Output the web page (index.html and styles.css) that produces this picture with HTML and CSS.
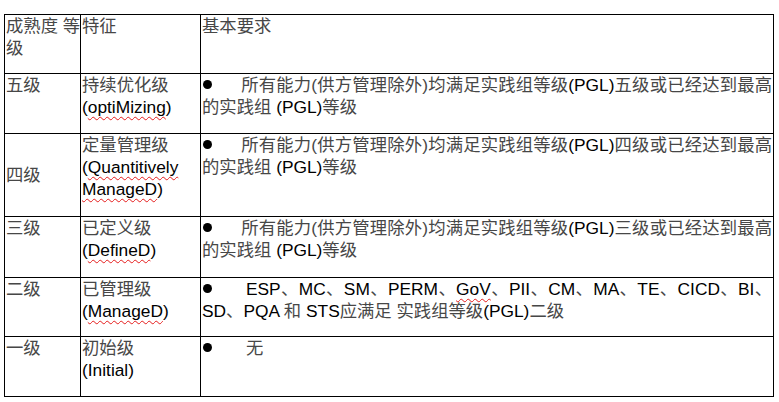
FILE: index.html
```html
<!DOCTYPE html>
<html lang="zh-CN">
<head>
<meta charset="utf-8">
<title>成熟度等级</title>
<link rel="stylesheet" href="styles.css">
</head>
<body>
<table class="grid">
  <colgroup>
    <col class="c1">
    <col class="c2">
    <col class="c3">
  </colgroup>
  <tr class="r-head">
    <td><span class="nw">成熟度 等</span><br>级</td>
    <td>特征</td>
    <td>基本要求</td>
  </tr>
  <tr class="r5">
    <td>五级</td>
    <td>持续优化级<br><span class="en">(<span class="sp">optiMizing</span>)</span></td>
    <td><p class="item"><span class="dot"></span>所有能力(供方管理除外)均满足实践组等级<span class="en">(PGL)</span>五级或已经达到最高的实践组 <span class="en">(PGL)</span>等级</p></td>
  </tr>
  <tr class="r4">
    <td class="mid">四级</td>
    <td>定量管理级<br><span class="en">(<span class="sp">Quantitively</span> <span class="sp">ManageD</span>)</span></td>
    <td><p class="item"><span class="dot"></span>所有能力(供方管理除外)均满足实践组等级<span class="en">(PGL)</span>四级或已经达到最高的实践组 <span class="en">(PGL)</span>等级</p></td>
  </tr>
  <tr class="r3">
    <td>三级</td>
    <td>已定义级<br><span class="en">(<span class="sp">DefineD</span>)</span></td>
    <td><p class="item"><span class="dot"></span>所有能力(供方管理除外)均满足实践组等级<span class="en">(PGL)</span>三级或已经达到最高的实践组 <span class="en">(PGL)</span>等级</p></td>
  </tr>
  <tr class="r2">
    <td>二级</td>
    <td>已管理级<br><span class="en">(<span class="sp">ManageD</span>)</span></td>
    <td><p class="item"><span class="dot wide"></span><span class="en">ESP</span>、<span class="en">MC</span>、<span class="en">SM</span>、<span class="en">PERM</span>、<span class="en"><span class="sp">GoV</span></span>、<span class="en">PII</span>、<span class="en">CM</span>、<span class="en">MA</span>、<span class="en">TE</span>、<span class="en">CICD</span>、<span class="en">BI</span>、<span class="en">SD</span>、<span class="en">PQA</span> 和 <span class="en">STS</span>应满足 实践组等级<span class="en">(PGL)</span>二级</p></td>
  </tr>
  <tr class="r1">
    <td>一级</td>
    <td>初始级<br><span class="en">(Initial)</span></td>
    <td><p class="item"><span class="dot wide"></span>无</p></td>
  </tr>
</table>
</body>
</html>
```
FILE: styles.css
```css
html, body {
  margin: 0;
  padding: 0;
  background: #ffffff;
}

body {
  font-family: "Liberation Sans", "Noto Sans CJK SC", sans-serif;
  font-size: 17.33px;
  line-height: 22px;
  color: #474747;
}

.grid {
  border-collapse: collapse;
  table-layout: fixed;
  width: 769px;
  margin: 14px 0 0 4px;
}

.c1 { width: 76px; }
.c2 { width: 120px; }
.c3 { width: 573px; }

.grid td {
  border: 1px solid #000;
  padding: 0 1px;
  vertical-align: top;
  overflow: visible;
  white-space: normal;
}

.grid td.mid {
  vertical-align: middle;
}

.nw {
  white-space: nowrap;
}

.r-head { height: 59px; }
.r5 { height: 60px; }
.r4 { height: 83px; }
.r3 { height: 61px; }
.r2 { height: 59px; }
.r1 { height: 60px; }

.en {
  color: #000;
}

.sp {
  text-decoration: underline wavy #e51c1c;
  text-decoration-thickness: 1px;
  text-underline-offset: 3px;
  text-decoration-skip-ink: none;
}

.item {
  margin: 0;
  text-align: justify;
}

.dot {
  display: inline-block;
  width: 39px;
  height: 10px;
  position: relative;
  vertical-align: baseline;
}

.dot.wide {
  width: 44px;
}

.dot::before {
  content: "";
  position: absolute;
  left: 1px;
  top: -1px;
  width: 9px;
  height: 9px;
  border-radius: 50%;
  background: #000;
}
```
